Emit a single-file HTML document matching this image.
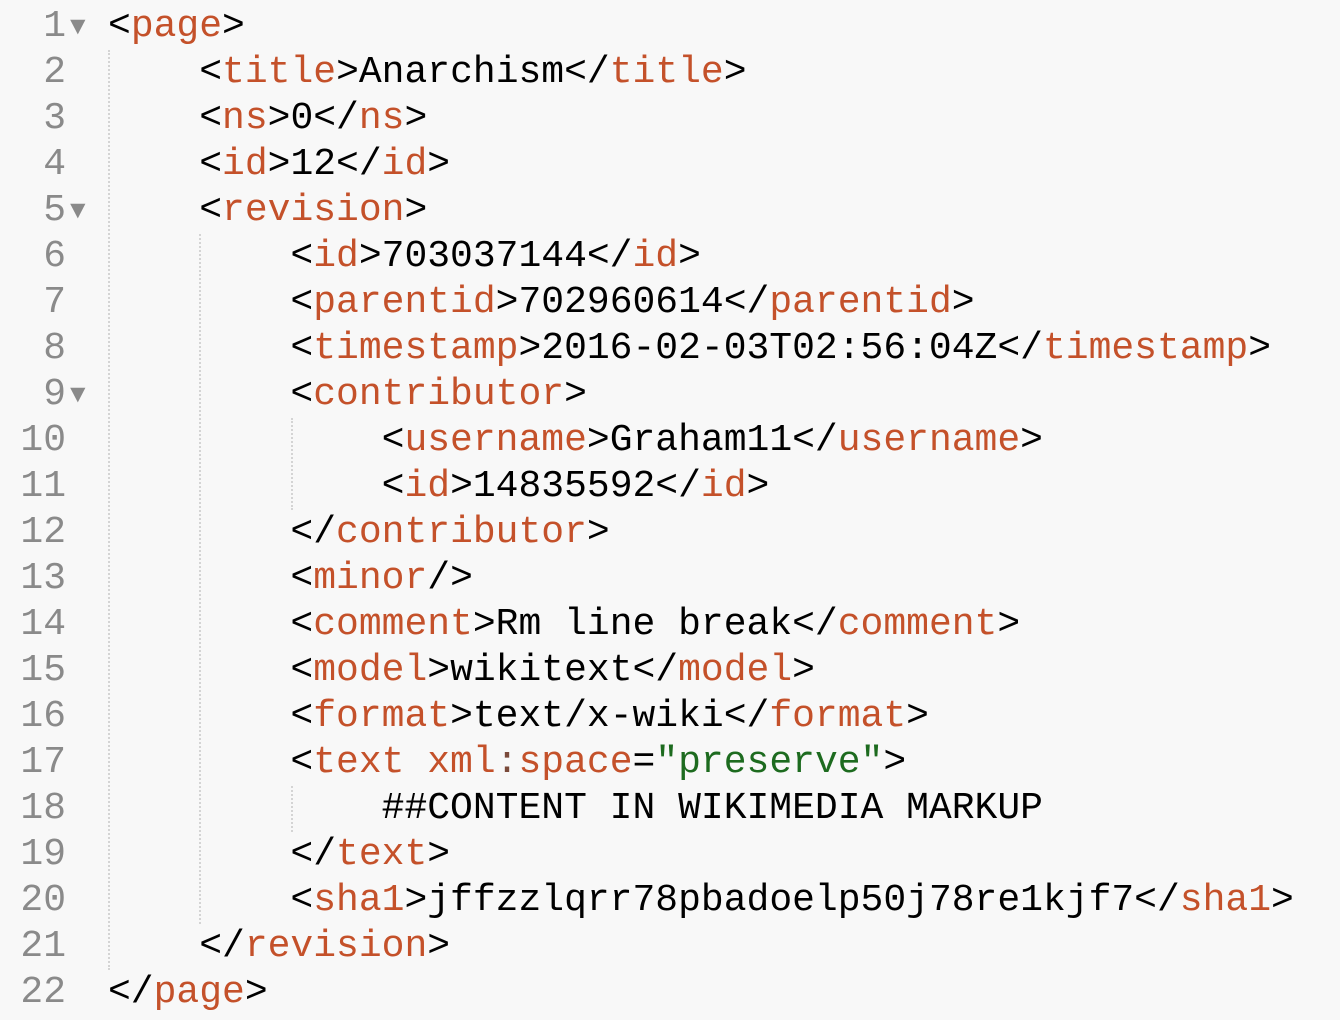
<!DOCTYPE html><html><head><style>
body{margin:0;width:1340px;height:1020px;background:#f8f8f8;overflow:hidden;position:relative;font-family:"Liberation Mono",monospace;font-size:38px;}
.l{position:absolute;left:0;height:46px;line-height:46px;white-space:pre;}
.n{position:absolute;width:66px;text-align:right;color:#8a8a8a;left:0}
.a{position:absolute;left:70px;color:#8a8a8a;font-size:26px}
.c{position:absolute;left:108px;color:#000}
.t{color:#c4512a}.s{color:#1d6b1f}
.g{position:absolute;border-left:2px dotted #d4d4d4;width:0}
</style></head><body>
<div class="g" style="left:108px;top:50px;height:920px"></div>
<div class="g" style="left:199px;top:234px;height:690px"></div>
<div class="g" style="left:291px;top:418px;height:92px"></div>
<div class="g" style="left:291px;top:786px;height:46px"></div>
<div class="l" style="top:4px"><span class="n">1</span><span class="a">▼</span><span class="c">&lt;<span class="t">page</span>&gt;</span></div>
<div class="l" style="top:50px"><span class="n">2</span><span class="c">    &lt;<span class="t">title</span>&gt;Anarchism&lt;/<span class="t">title</span>&gt;</span></div>
<div class="l" style="top:96px"><span class="n">3</span><span class="c">    &lt;<span class="t">ns</span>&gt;0&lt;/<span class="t">ns</span>&gt;</span></div>
<div class="l" style="top:142px"><span class="n">4</span><span class="c">    &lt;<span class="t">id</span>&gt;12&lt;/<span class="t">id</span>&gt;</span></div>
<div class="l" style="top:188px"><span class="n">5</span><span class="a">▼</span><span class="c">    &lt;<span class="t">revision</span>&gt;</span></div>
<div class="l" style="top:234px"><span class="n">6</span><span class="c">        &lt;<span class="t">id</span>&gt;703037144&lt;/<span class="t">id</span>&gt;</span></div>
<div class="l" style="top:280px"><span class="n">7</span><span class="c">        &lt;<span class="t">parentid</span>&gt;702960614&lt;/<span class="t">parentid</span>&gt;</span></div>
<div class="l" style="top:326px"><span class="n">8</span><span class="c">        &lt;<span class="t">timestamp</span>&gt;2016-02-03T02:56:04Z&lt;/<span class="t">timestamp</span>&gt;</span></div>
<div class="l" style="top:372px"><span class="n">9</span><span class="a">▼</span><span class="c">        &lt;<span class="t">contributor</span>&gt;</span></div>
<div class="l" style="top:418px"><span class="n">10</span><span class="c">            &lt;<span class="t">username</span>&gt;Graham11&lt;/<span class="t">username</span>&gt;</span></div>
<div class="l" style="top:464px"><span class="n">11</span><span class="c">            &lt;<span class="t">id</span>&gt;14835592&lt;/<span class="t">id</span>&gt;</span></div>
<div class="l" style="top:510px"><span class="n">12</span><span class="c">        &lt;/<span class="t">contributor</span>&gt;</span></div>
<div class="l" style="top:556px"><span class="n">13</span><span class="c">        &lt;<span class="t">minor</span>/&gt;</span></div>
<div class="l" style="top:602px"><span class="n">14</span><span class="c">        &lt;<span class="t">comment</span>&gt;Rm line break&lt;/<span class="t">comment</span>&gt;</span></div>
<div class="l" style="top:648px"><span class="n">15</span><span class="c">        &lt;<span class="t">model</span>&gt;wikitext&lt;/<span class="t">model</span>&gt;</span></div>
<div class="l" style="top:694px"><span class="n">16</span><span class="c">        &lt;<span class="t">format</span>&gt;text/x-wiki&lt;/<span class="t">format</span>&gt;</span></div>
<div class="l" style="top:740px"><span class="n">17</span><span class="c">        &lt;<span class="t">text xml</span><span style="color:#7a4a3a">:</span><span class="t">space</span>=<span class="s">"preserve"</span>&gt;</span></div>
<div class="l" style="top:786px"><span class="n">18</span><span class="c">            ##CONTENT IN WIKIMEDIA MARKUP</span></div>
<div class="l" style="top:832px"><span class="n">19</span><span class="c">        &lt;/<span class="t">text</span>&gt;</span></div>
<div class="l" style="top:878px"><span class="n">20</span><span class="c">        &lt;<span class="t">sha1</span>&gt;jffzzlqrr78pbadoelp50j78re1kjf7&lt;/<span class="t">sha1</span>&gt;</span></div>
<div class="l" style="top:924px"><span class="n">21</span><span class="c">    &lt;/<span class="t">revision</span>&gt;</span></div>
<div class="l" style="top:970px"><span class="n">22</span><span class="c">&lt;/<span class="t">page</span>&gt;</span></div>
</body></html>
